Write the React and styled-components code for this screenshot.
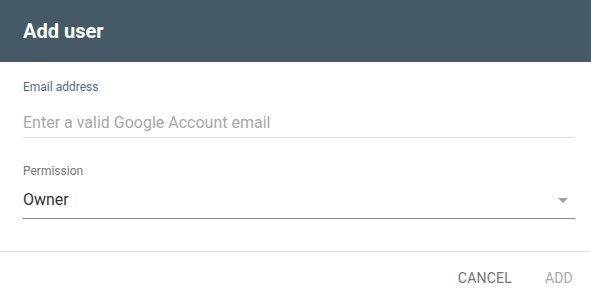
import React from "react";
import styled, { createGlobalStyle } from "styled-components";

const Global = createGlobalStyle`
  html, body { margin: 0; padding: 0; background: #fff; }
  body { font-family: Roboto, "Noto Sans", Arial, sans-serif; -webkit-font-smoothing: antialiased; }
`;

const Dialog = styled.div`
  width: 591px;
  height: 299px;
  display: flex;
  flex-direction: column;
  background: #fff;
`;

const Header = styled.div`
  height: 62px;
  box-sizing: border-box;
  background: #455a64;
  display: flex;
  align-items: center;
  padding: 0 23px 1px;
`;

const Title = styled.h2`
  margin: 0;
  font-size: 20px;
  font-weight: 700;
  color: #fff;
`;

const Body = styled.div`
  padding: 17px 16px 32px 23px;
  display: flex;
  flex-direction: column;
`;

const Field = styled.div`
  display: flex;
  flex-direction: column;
  margin-top: ${(p) => p.$gap || 0}px;
`;

const Label = styled.label`
  font-size: 12px;
  line-height: 16px;
  color: ${(p) => p.$color || "#5f6368"};
`;

const Input = styled.div`
  margin-top: ${(p) => p.$top}px;
  font-size: 16px;
  line-height: 20px;
  padding-bottom: ${(p) => p.$pb}px;
  border-bottom: 1px solid ${(p) => p.$line};
  color: ${(p) => p.$color};
  display: flex;
  align-items: center;
  justify-content: space-between;
`;

const Arrow = styled.span`
  width: 0;
  height: 0;
  border-left: 5px solid transparent;
  border-right: 5px solid transparent;
  border-top: 5px solid #9e9e9e;
  margin-right: 7px;
`;

const Footer = styled.div`
  border-top: 1px solid #e0e0e0;
  display: flex;
  justify-content: flex-end;
  align-items: center;
  padding: 8px 10px 0 0;
  gap: 17px;
`;

const Button = styled.button`
  background: none;
  border: none;
  font-family: inherit;
  font-size: 14px;
  font-weight: 400;
  text-transform: uppercase;
  letter-spacing: 0.2px;
  color: ${(p) => (p.$disabled ? "#aaaaaa" : "#757575")};
  height: 36px;
  padding: 0 8px;
  cursor: pointer;
`;

export default function App() {
  return (
    <>
      <Global />
      <Dialog>
        <Header>
          <Title>Add user</Title>
        </Header>
        <Body>
          <Field>
            <Label $color="#546e7a">Email address</Label>
            <Input $top={18} $pb={4} $line="#e0e0e0" $color="#a8a8a8">
              Enter a valid Google Account email
            </Input>
          </Field>
          <Field $gap={25}>
            <Label $color="#757575">Permission</Label>
            <Input $top={11} $pb={8} $line="#8a8a8a" $color="#333333">
              Owner
              <Arrow />
            </Input>
          </Field>
        </Body>
        <Footer>
          <Button>Cancel</Button>
          <Button $disabled>Add</Button>
        </Footer>
      </Dialog>
    </>
  );
}
